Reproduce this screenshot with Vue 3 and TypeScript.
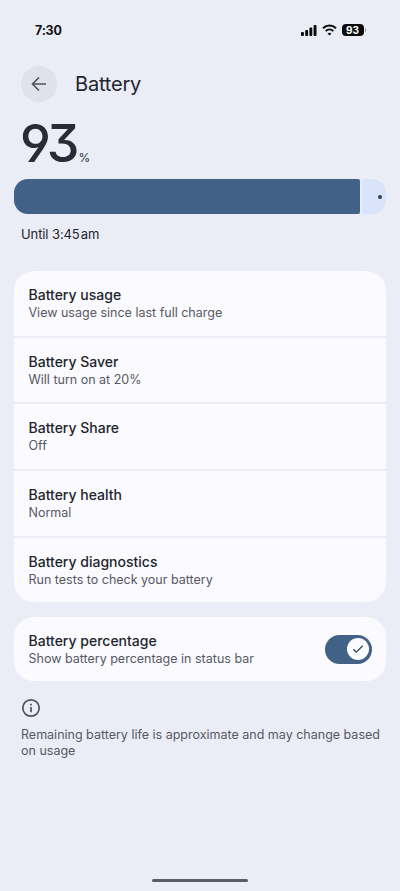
<script setup lang="ts">
import { ref } from 'vue'

interface Item {
  title: string
  summary: string
}

const level = 93
const items: Item[] = [
  { title: 'Battery usage', summary: 'View usage since last full charge' },
  { title: 'Battery Saver', summary: 'Will turn on at 20%' },
  { title: 'Battery Share', summary: 'Off' },
  { title: 'Battery health', summary: 'Normal' },
  { title: 'Battery diagnostics', summary: 'Run tests to check your battery' },
]
const showPercentage = ref(true)
</script>

<template>
  <div class="screen">
    <div class="status">
      <span class="clock">7:30</span>
      <div class="indicators">
        <svg class="signal" width="16" height="11" viewBox="0 0 16 11">
          <rect x="0" y="7" width="2.9" height="4" rx="0.9" />
          <rect x="4.2" y="5" width="2.9" height="6" rx="0.9" />
          <rect x="8.4" y="2.6" width="2.9" height="8.4" rx="0.9" />
          <rect x="12.6" y="0" width="2.9" height="11" rx="0.9" />
        </svg>
        <svg class="wifi" width="15" height="12" viewBox="0 0 15 12" fill="none" stroke="#0b0b0d" stroke-width="2">
          <path d="M1 4.2C4.7 .5 10.300 .5 14 4.200" />
          <path d="M3.700 7.100C5.900 5 9.100 5 11.300 7.100" />
          <path d="M7.500 11.400L5.500 9.400Q7.500 7.900 9.500 9.400Z" fill="#0b0b0d" stroke="none" />
        </svg>
        <span class="cell">{{ level }}</span>
        <span class="cap"></span>
      </div>
    </div>

    <header class="header">
      <button class="back" aria-label="Back">
        <svg width="16" height="16" viewBox="0 0 16 16" fill="none" stroke="#50515f" stroke-width="1.600">
          <path d="M15 8H2M8 1.500L1.500 8L8 14.500" />
        </svg>
      </button>
      <h1>Battery</h1>
    </header>

    <div class="level"><span class="number">{{ level }}</span><span class="percent">%</span></div>
    <div class="meter">
      <div class="filled" :style="{ width: level + '%' }"></div>
      <div class="rest"><i></i></div>
    </div>
    <p class="until">Until 3:45&#8202;am</p>

    <section class="group">
      <div v-for="item in items" :key="item.title" class="row">
        <div class="title">{{ item.title }}</div>
        <div class="summary">{{ item.summary }}</div>
      </div>
    </section>

    <section class="group toggle-group">
      <div class="row toggle-row" @click="showPercentage = !showPercentage">
        <div>
          <div class="title">Battery percentage</div>
          <div class="summary">Show battery percentage in status bar</div>
        </div>
        <div class="switch" :class="{ on: showPercentage }">
          <span class="thumb">
            <svg width="12" height="10" viewBox="0 0 12 10" fill="none" stroke="#34445a" stroke-width="1.300">
              <path d="M1.300 5.200L4.300 8.200L10.700 1.800" />
            </svg>
          </span>
        </div>
      </div>
    </section>

    <footer class="note">
      <svg width="20" height="20" viewBox="0 0 20 20" fill="none" stroke="#50515c" stroke-width="1.700">
        <circle cx="10" cy="10" r="8.200" />
        <path d="M10 9V14.200M10 5.800V7.500" />
      </svg>
      <p>Remaining battery life is approximate and may change based on usage</p>
    </footer>

    <div class="home"></div>
  </div>
</template>

<style>
body {
  background: #ebedf6;
}
</style>

<style scoped>
.screen {
  box-sizing: border-box;
  width: 400px;
  height: 891px;
  padding: 0 14px;
  display: flex;
  flex-direction: column;
  background: #ebedf6;
  color: #23252d;
  font-family: Inter, Roboto, sans-serif;
  overflow: hidden;
}
.status {
  height: 60px;
  padding: 0 20px 0 21px;
  display: flex;
  align-items: center;
  justify-content: space-between;
}
.clock {
  font-size: 12.500px;
  font-weight: 700;
  letter-spacing: -0.200px;
  color: #101116;
}
.indicators {
  display: flex;
  align-items: center;
}
.signal {
  fill: #0b0b0d;
}
.wifi {
  margin-left: 5px;
}
.cell {
  margin-left: 5px;
  width: 22px;
  height: 12px;
  border-radius: 4px;
  background: #0b0b0d;
  color: #fff;
  font-size: 10px;
  font-weight: 700;
  line-height: 12px;
  text-align: center;
}
.cap {
  width: 1.500px;
  height: 4px;
  margin-left: 1px;
  border-radius: 0 2px 2px 0;
  background: #96979d;
}
.header {
  height: 48px;
  padding-left: 7px;
  display: flex;
  align-items: center;
  gap: 18px;
}
.back {
  width: 36px;
  height: 36px;
  padding: 0;
  border: 0;
  border-radius: 50%;
  background: #dfe1eb;
  display: flex;
  align-items: center;
  justify-content: center;
}
h1 {
  margin: 0;
  font-size: 20px;
  font-weight: 400;
  letter-spacing: -0.200px;
}
.level {
  height: 71px;
  padding-left: 6px;
  display: flex;
  align-items: baseline;
  line-height: 71px;
  color: #292c35;
}
.number {
  font-size: 52px;
  font-weight: 500;
  letter-spacing: -4px;
  font-feature-settings: 'cv04', 'ss01';
}
.percent {
  margin-left: 3px;
  font-size: 12px;
}
.meter {
  height: 35px;
  display: flex;
  gap: 2px;
}
.filled {
  border-radius: 14px 2px 2px 14px;
  background: #426187;
}
.rest {
  flex: 1;
  padding-right: 4px;
  border-radius: 2px 14px 14px 2px;
  background: #d9e3f9;
  display: flex;
  align-items: center;
  justify-content: flex-end;
}
.rest i {
  width: 4px;
  height: 4px;
  border-radius: 50%;
  background: #293e60;
}
.until {
  margin: 11px 0 0 7px;
  font-size: 13px;
  line-height: 18px;
  letter-spacing: -0.100px;
}
.group {
  margin-top: 28px;
  border-radius: 20px;
  overflow: hidden;
  display: flex;
  flex-direction: column;
  gap: 2.200px;
}
.row {
  box-sizing: border-box;
  height: 64.500px;
  padding: 14px 14.500px 0;
  background: #fafaff;
}
.title {
  font-size: 14px;
  font-weight: 500;
  line-height: 20px;
}
.summary {
  font-size: 12.500px;
  line-height: 16px;
  color: #575962;
}
.toggle-group {
  margin-top: 14.500px;
}
.toggle-row {
  display: flex;
  justify-content: space-between;
}
.switch {
  box-sizing: border-box;
  width: 47px;
  height: 29px;
  margin-top: 4px;
  padding: 3px;
  border-radius: 15px;
  background: #a9afbc;
  display: flex;
  align-items: center;
}
.switch.on {
  justify-content: flex-end;
  background: #426187;
}
.thumb {
  width: 22px;
  height: 22px;
  border-radius: 50%;
  background: #fcfcff;
  display: flex;
  align-items: center;
  justify-content: center;
}
.note {
  padding: 17px 7px 0;
  color: #565863;
}
.note svg {
  display: block;
}
.note p {
  margin: 9px -5px 0 0;
  font-size: 12.500px;
  line-height: 16px;
}
.home {
  width: 96px;
  height: 3px;
  margin: auto auto 9px;
  border-radius: 2px;
  background: #5b5c66;
}
</style>
